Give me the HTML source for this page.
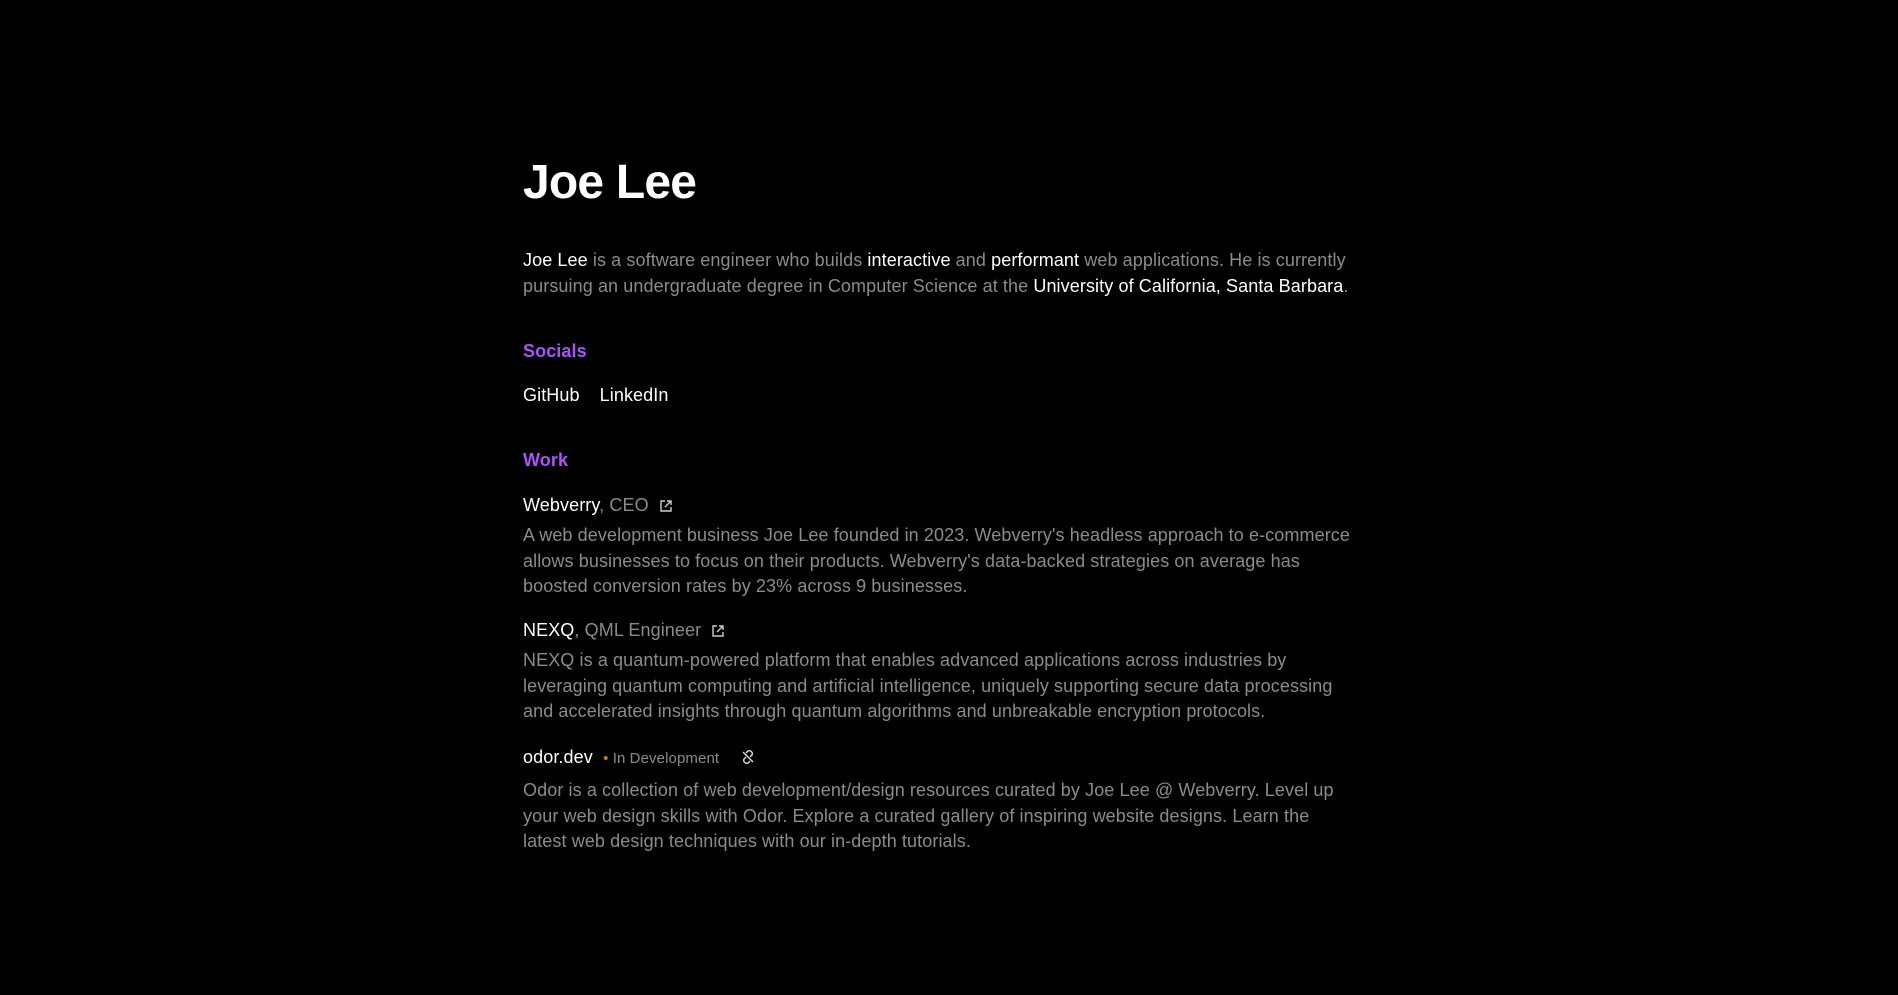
<!DOCTYPE html>
<html><head><meta charset="utf-8"><style>
html,body{margin:0;background:#000;width:1898px;height:995px;overflow:hidden}
body{font-family:"Liberation Sans",Arial,sans-serif;color:#8b8b8b;font-size:18px;letter-spacing:0.1px}
.a{position:absolute;left:523px;white-space:nowrap}
.w{color:#fff}
h1{margin:0;font-size:48px;color:#fff;font-weight:700;letter-spacing:-0.8px}
.h{color:#a855f7;font-weight:700;font-size:18px}
.l{line-height:25.5px}
.s{font-size:15px;color:#8b8b8b}
svg{vertical-align:-2px}
</style></head><body>
<div class="a" style="top:155px"><h1>Joe Lee</h1></div>
<div class="a l" style="top:248px"><span class="w">Joe Lee</span> is a software engineer who builds <span class="w">interactive</span> and <span class="w">performant</span> web applications. He is currently<br>pursuing an undergraduate degree in Computer Science at the <span class="w">University of California, Santa Barbara</span>.</div>
<div class="a h" style="top:341px">Socials</div>
<div class="a w" style="top:385px">GitHub<span style="display:inline-block;width:20px"></span>LinkedIn</div>
<div class="a h" style="top:450px">Work</div>
<div class="a" style="top:495px"><span class="w">Webverry</span>, CEO &nbsp;<svg width="14" height="14" viewBox="0 0 14 14" fill="none" stroke="#ccc" stroke-width="1.4"><path d="M6 2H2v10h10V8M8 2h4v4M12 2L6 8"/></svg></div>
<div class="a l" style="top:523px">A web development business Joe Lee founded in 2023. Webverry's headless approach to e-commerce<br>allows businesses to focus on their products. Webverry's data-backed strategies on average has<br>boosted conversion rates by 23% across 9 businesses.</div>
<div class="a" style="top:620px"><span class="w">NEXQ</span>, QML Engineer &nbsp;<svg width="14" height="14" viewBox="0 0 14 14" fill="none" stroke="#ccc" stroke-width="1.4"><path d="M6 2H2v10h10V8M8 2h4v4M12 2L6 8"/></svg></div>
<div class="a l" style="top:648px">NEXQ is a quantum-powered platform that enables advanced applications across industries by<br>leveraging quantum computing and artificial intelligence, uniquely supporting secure data processing<br>and accelerated insights through quantum algorithms and unbreakable encryption protocols.</div>
<div class="a" style="top:747px"><span class="w">odor.dev</span> &nbsp;<span class="s"><span style="color:#d97706">•</span> In Development</span> &nbsp; &nbsp;<svg width="16" height="16" viewBox="0 0 16 16" fill="none" stroke="#ddd" stroke-width="1.4"><path d="M6 4l2-2a3 3 0 014 4l-2 2M10 12l-2 2a3 3 0 01-4-4l2-2M3 3l10 10"/></svg></div>
<div class="a l" style="top:778px">Odor is a collection of web development/design resources curated by Joe Lee @ Webverry. Level up<br>your web design skills with Odor. Explore a curated gallery of inspiring website designs. Learn the<br>latest web design techniques with our in-depth tutorials.</div>
</body></html>
